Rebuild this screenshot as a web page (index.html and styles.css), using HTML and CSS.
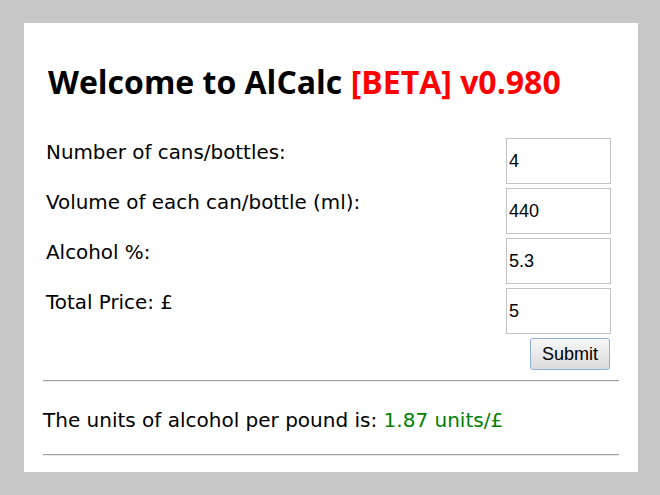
FILE: index.html
```html
<!DOCTYPE html>
<html>
<head>
<meta charset="utf-8">
<title>AlCalc</title>
<link rel="stylesheet" href="styles.css">
</head>
<body>
<main class="card">
  <h1 class="title">Welcome to AlCalc <span class="beta">[BETA] v0.980</span></h1>
  <form class="calc">
    <div class="fields">
      <label class="label" for="n">Number of cans/bottles:</label>
      <input class="field" id="n" type="text" value="4">
      <label class="label" for="v">Volume of each can/bottle (ml):</label>
      <input class="field" id="v" type="text" value="440">
      <label class="label" for="a">Alcohol %:</label>
      <input class="field" id="a" type="text" value="5.3">
      <label class="label" for="p">Total Price: £</label>
      <input class="field" id="p" type="text" value="5">
    </div>
    <div class="actions">
      <button class="submit" type="button">Submit</button>
    </div>
  </form>
  <hr class="rule">
  <p class="result">The units of alcohol per pound is: <span class="value">1.87 units/£</span></p>
  <hr class="rule">
</main>
</body>
</html>
```
FILE: styles.css
```css
html, body {
  margin: 0;
  padding: 0;
}
body {
  background: #c8c8c8;
  padding: 23px 22px 23px 24px;
  font-family: "DejaVu Sans", Verdana, sans-serif;
  color: #000;
}
.card {
  display: flow-root;
  box-sizing: border-box;
  width: 614px;
  height: 449px;
  background: #fff;
  padding: 0 19px;
}
.title {
  margin: 39px 0 36px;
  padding-left: 5px;
  font-family: "Open Sans", sans-serif;
  font-weight: bold;
  font-size: 32px;
  line-height: 40px;
  white-space: nowrap;
}
.beta {
  color: #ff0000;
}
.calc {
  margin: 0;
  padding: 0 8px 0 3px;
}
.fields {
  display: grid;
  grid-template-columns: 1fr 105px;
  row-gap: 4px;
  align-items: start;
}
.label {
  font-size: 19.9px;
  line-height: 23px;
  padding-top: 3px;
  white-space: nowrap;
}
.field {
  box-sizing: border-box;
  width: 105px;
  height: 46px;
  margin: 0;
  border: 1px solid #c3c3c3;
  padding: 0 2px;
  font-family: "Liberation Sans", Arial, sans-serif;
  font-size: 18px;
  color: #000;
  background: #fff;
  outline: none;
}
.actions {
  display: flex;
  justify-content: flex-end;
  margin-top: 4px;
}
.submit {
  box-sizing: border-box;
  width: 80px;
  height: 32px;
  margin: 0 1px 0 0;
  padding: 0;
  border: 1px solid #8fb0dc;
  border-radius: 3px;
  background: linear-gradient(#f7f7f7, #e9e9e9 50%, #dcdcdc);
  font-family: "Liberation Sans", Arial, sans-serif;
  font-size: 18px;
  color: #000;
}
.rule {
  margin: 0;
  height: 0;
  border: 0;
  border-top: 1px solid #a3a3a3;
  border-bottom: 1px solid #ececec;
}
.calc + .rule {
  margin-top: 10px;
}
.result {
  margin: 26px 0 22px;
  font-size: 20px;
  line-height: 24px;
  white-space: nowrap;
}
.value {
  color: #008000;
}
```
